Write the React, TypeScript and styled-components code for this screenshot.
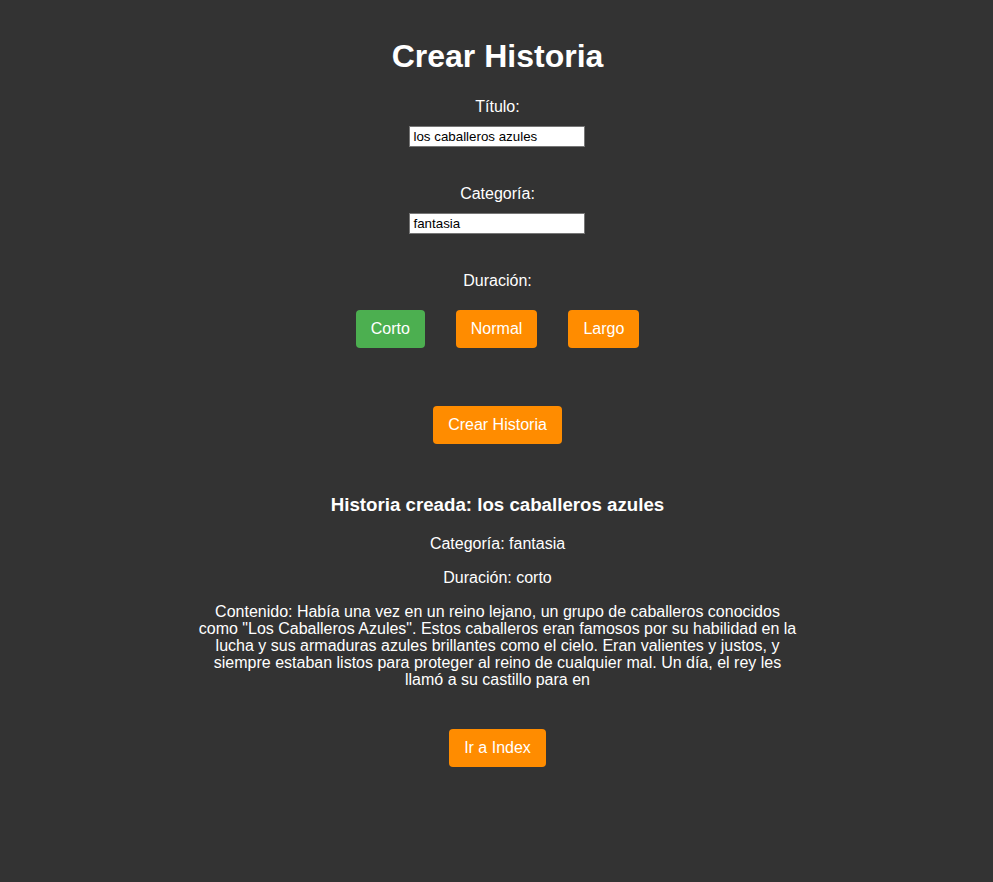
import React from "react";
import styled, { createGlobalStyle } from "styled-components";

const Global = createGlobalStyle`
  html, body { margin: 0; padding: 0; background: #333333; }
  body { font-family: "Liberation Sans", Arial, sans-serif; color: #ffffff; }
`;

const Page = styled.div`
  min-height: 882px;
  display: flex;
  flex-direction: column;
  align-items: center;
  padding-top: 38px;
  padding-left: 2px;
  box-sizing: border-box;
`;

const Title = styled.h1`
  font-size: 32px;
  font-weight: bold;
  margin: 0 0 23px;
  line-height: 37px;
`;

const Form = styled.form`
  display: flex;
  flex-direction: column;
  align-items: center;
`;

const Label = styled.label`
  font-size: 16px;
  line-height: 18px;
  margin-bottom: 10px;
`;

const Input = styled.input`
  width: 176px;
  height: 21px;
  box-sizing: border-box;
  font-family: "Liberation Sans", Arial, sans-serif;
  font-size: 13.33px;
  padding: 1px 3px;
  border: 1px solid #767676;
  border-radius: 0;
  background: #fff;
  color: #000;
  margin-bottom: 38px;
  outline: none;
`;

const ButtonRow = styled.div`
  display: flex;
  gap: 31px;
  margin-top: 10px;
  margin-bottom: 58px;
`;

const Button = styled.button<{ $active?: boolean }>`
  background: ${(p) => (p.$active ? "#4caf50" : "#ff8c00")};
  color: #fff;
  border: none;
  border-radius: 4px;
  padding: 10px 15px;
  height: 38px;
  font-family: "Liberation Sans", Arial, sans-serif;
  font-size: 16px;
  line-height: 18px;
  cursor: pointer;
`;

const Result = styled.div`
  display: flex;
  flex-direction: column;
  align-items: center;
  margin-top: 50px;
`;

const ResultTitle = styled.h3`
  font-size: 18.7px;
  font-weight: bold;
  line-height: 22px;
  margin: 0 0 19px;
`;

const Info = styled.p`
  font-size: 16px;
  line-height: 18px;
  margin: 0 0 16px;
  text-align: center;
  max-width: 600px;
`;

const Content = styled(Info)`
  line-height: 17px;
  margin-bottom: 41px;
`;

export default function App() {
  return (
    <>
      <Global />
      <Page>
        <Title>Crear Historia</Title>
        <Form onSubmit={(e) => e.preventDefault()}>
          <Label htmlFor="titulo">Título:</Label>
          <Input id="titulo" defaultValue="los caballeros azules" />
          <Label htmlFor="categoria">Categoría:</Label>
          <Input id="categoria" defaultValue="fantasia" />
          <Label>Duración:</Label>
          <ButtonRow>
            <Button type="button" $active>Corto</Button>
            <Button type="button">Normal</Button>
            <Button type="button">Largo</Button>
          </ButtonRow>
          <Button type="submit">Crear Historia</Button>
        </Form>
        <Result>
          <ResultTitle>Historia creada: los caballeros azules</ResultTitle>
          <Info>Categoría: fantasia</Info>
          <Info>Duración: corto</Info>
          <Content>
            Contenido: Había una vez en un reino lejano, un grupo de caballeros conocidos como "Los Caballeros Azules". Estos caballeros eran famosos por su habilidad en la lucha y sus armaduras azules brillantes como el cielo. Eran valientes y justos, y siempre estaban listos para proteger al reino de cualquier mal. Un día, el rey les llamó a su castillo para en
          </Content>
          <Button type="button">Ir a Index</Button>
        </Result>
      </Page>
    </>
  );
}
